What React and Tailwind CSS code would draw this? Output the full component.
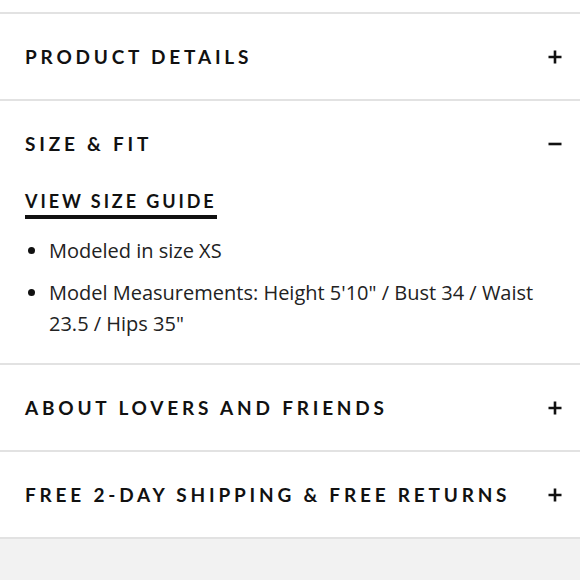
import React from "react";

const Plus = () => (
  <svg width="16" height="16" viewBox="0 0 16 16" className="shrink-0">
    <path d="M8 1.5v13M1.5 8h13" stroke="#111" strokeWidth="2.6" />
  </svg>
);
const Minus = () => (
  <svg width="16" height="16" viewBox="0 0 16 16" className="shrink-0">
    <path d="M1.5 8h13" stroke="#111" strokeWidth="2.6" />
  </svg>
);

const Header = ({ title, open }) => (
  <div className="flex items-center justify-between h-[85px] pl-[25px] pr-[17px]">
    <span className="text-[19px] font-bold tracking-[3.8px] text-[#111] leading-none">{title}</span>
    {open ? <Minus /> : <Plus />}
  </div>
);

const Dot = () => (
  <span className="w-[24px] shrink-0 flex items-center h-[31px]">
    <span className="ml-[3px] w-[7px] h-[7px] rounded-full bg-[#111]" />
  </span>
);

export default function App() {
  return (
    <div className="w-[580px] h-[580px] bg-white overflow-hidden" style={{ fontFamily: "Lato, 'Liberation Sans', sans-serif" }}>
      <div className="h-[12px]" />
      <div className="border-t-2 border-[#e2e2e2]">
        <Header title="PRODUCT DETAILS" />
      </div>
      <div className="border-t-2 border-[#e2e2e2]">
        <Header title="SIZE & FIT" open />
        <div className="pl-[25px] pr-[30px] pb-[24px] mt-[4px]">
          <div className="inline-block text-[18px] font-bold tracking-[2.9px] text-[#111] leading-none pb-[5px] border-b-[4px] border-[#111]">
            VIEW SIZE GUIDE
          </div>
          <ul
            className="mt-[16px] flex flex-col gap-[11px] text-[20px] text-[#222] leading-[31px]"
            style={{ fontFamily: "'Open Sans', 'Liberation Sans', sans-serif" }}
          >
            <li className="flex">
              <Dot />
              <span>Modeled in size XS</span>
            </li>
            <li className="flex">
              <Dot />
              <span>Model Measurements: Height 5'10" / Bust 34 / Waist 23.5 / Hips 35"</span>
            </li>
          </ul>
        </div>
      </div>
      <div className="border-t-2 border-[#e2e2e2]">
        <Header title="ABOUT LOVERS AND FRIENDS" />
      </div>
      <div className="border-t-2 border-[#e2e2e2]">
        <Header title="FREE 2-DAY SHIPPING & FREE RETURNS" />
      </div>
      <div className="border-t-2 border-[#e2e2e2] bg-[#f2f2f2] h-[60px]" />
    </div>
  );
}
